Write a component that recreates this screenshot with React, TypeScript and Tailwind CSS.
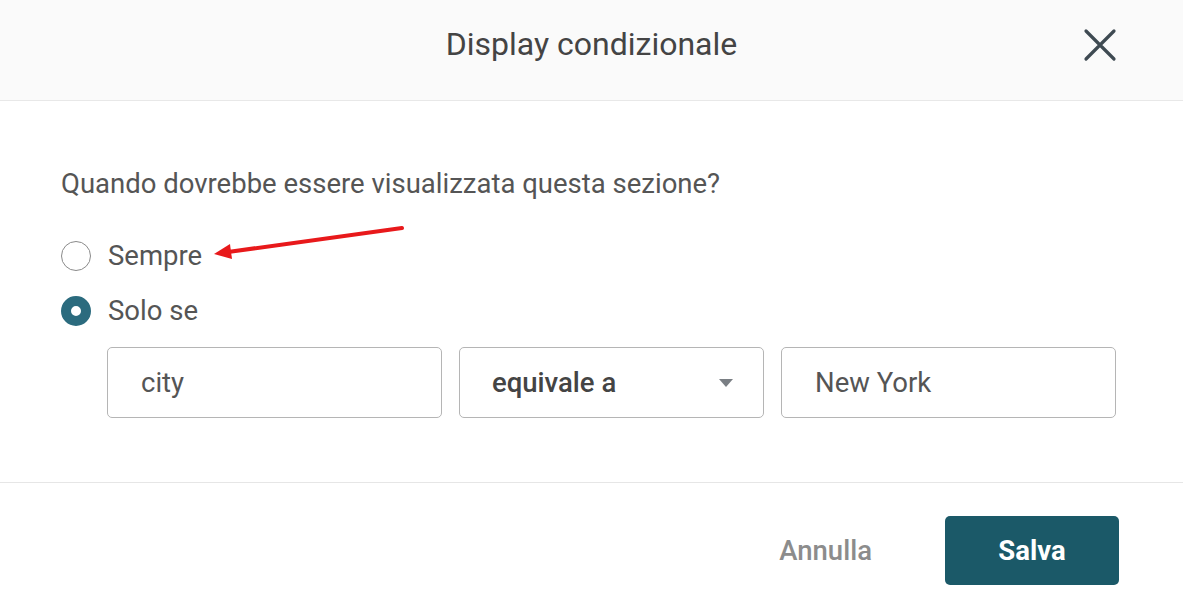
import { useState } from 'react';

const conditionFields = [
  { id: 'field', value: 'city', width: 'w-[336px]' },
  { id: 'value', value: 'New York', width: 'w-[336px]' },
];

export default function App() {
  const [mode, setMode] = useState<'always' | 'only'>('only');

  return (
    <div className="w-[1183px] h-[597px] bg-white overflow-hidden font-['Roboto',sans-serif] text-[#555]">
      <div className="relative h-[101px] bg-[#fafafa] border-b border-[#e8e8e8] flex items-center justify-center">
        <h2 className="text-[32px] leading-[40px] text-[#444] -mt-[12px]">Display condizionale</h2>
        <button className="absolute right-[64px] top-[26px] w-[38px] h-[38px] flex items-center justify-center">
          <svg width="34" height="34" viewBox="0 0 34 34" fill="none" stroke="#3e4a52" strokeWidth="3.2" strokeLinecap="round">
            <path d="M3 3 L31 31 M31 3 L3 31" />
          </svg>
        </button>
      </div>

      <div className="relative pl-[61px] pr-[67px] pt-[68px] h-[382px] border-b border-[#e6e6e6]">
        <p className="text-[27.5px] leading-[30px]">Quando dovrebbe essere visualizzata questa sezione?</p>

        <div className="mt-[42px] flex flex-col gap-[25px]">
          <label className="flex items-center gap-[17px] cursor-pointer" onClick={() => setMode('always')}>
            <span
              className={
                mode === 'always'
                  ? 'w-[30px] h-[30px] rounded-full border-[10px] border-[#2b6b7e] bg-white'
                  : 'w-[30px] h-[30px] rounded-full border-[1.5px] border-[#8a8a8a] bg-white'
              }
            />
            <span className="text-[27.5px] leading-[30px]">Sempre</span>
          </label>
          <label className="flex items-center gap-[17px] cursor-pointer" onClick={() => setMode('only')}>
            <span
              className={
                mode === 'only'
                  ? 'w-[30px] h-[30px] rounded-full border-[10px] border-[#2b6b7e] bg-white'
                  : 'w-[30px] h-[30px] rounded-full border-[1.5px] border-[#8a8a8a] bg-white'
              }
            />
            <span className="text-[27.5px] leading-[30px]">Solo se</span>
          </label>
        </div>

        <div className="ml-[46px] mt-[21px] flex gap-[17px]">
          <div className={`${conditionFields[0].width} h-[71px] border border-[#b5b5b5] rounded-[5px] flex items-center px-[33px] text-[27.5px] text-[#555]`}>
            {conditionFields[0].value}
          </div>
          <div className="w-[306px] h-[71px] border border-[#b5b5b5] rounded-[5px] flex items-center justify-between pl-[32px] pr-[30px] text-[27.5px] font-medium text-[#444]">
            <span>equivale a</span>
            <svg width="14" height="8" viewBox="0 0 14 8">
              <path d="M0 0 L14 0 L7 8 Z" fill="#7a7f84" />
            </svg>
          </div>
          <div className={`${conditionFields[1].width} h-[71px] border border-[#b5b5b5] rounded-[5px] flex items-center px-[33px] text-[27.5px] text-[#555]`}>
            {conditionFields[1].value}
          </div>
        </div>

        {/* annotation arrow */}
        <svg className="absolute left-[210px] top-[120px] pointer-events-none" width="200" height="40" viewBox="0 0 200 40">
          <line x1="192" y1="7" x2="18" y2="31" stroke="#e8191b" strokeWidth="4" strokeLinecap="round" />
          <path d="M4 33 L20 23 L22 38 Z" fill="#e8191b" />
        </svg>
      </div>

      <div className="flex items-center justify-end gap-[73px] pr-[64px] pt-[33px]">
        <button className="text-[27.5px] font-medium text-[#8c8c8c]">Annulla</button>
        <button className="w-[174px] h-[69px] rounded-[5px] bg-[#1b5968] text-white text-[27.5px] font-bold">Salva</button>
      </div>
    </div>
  );
}
